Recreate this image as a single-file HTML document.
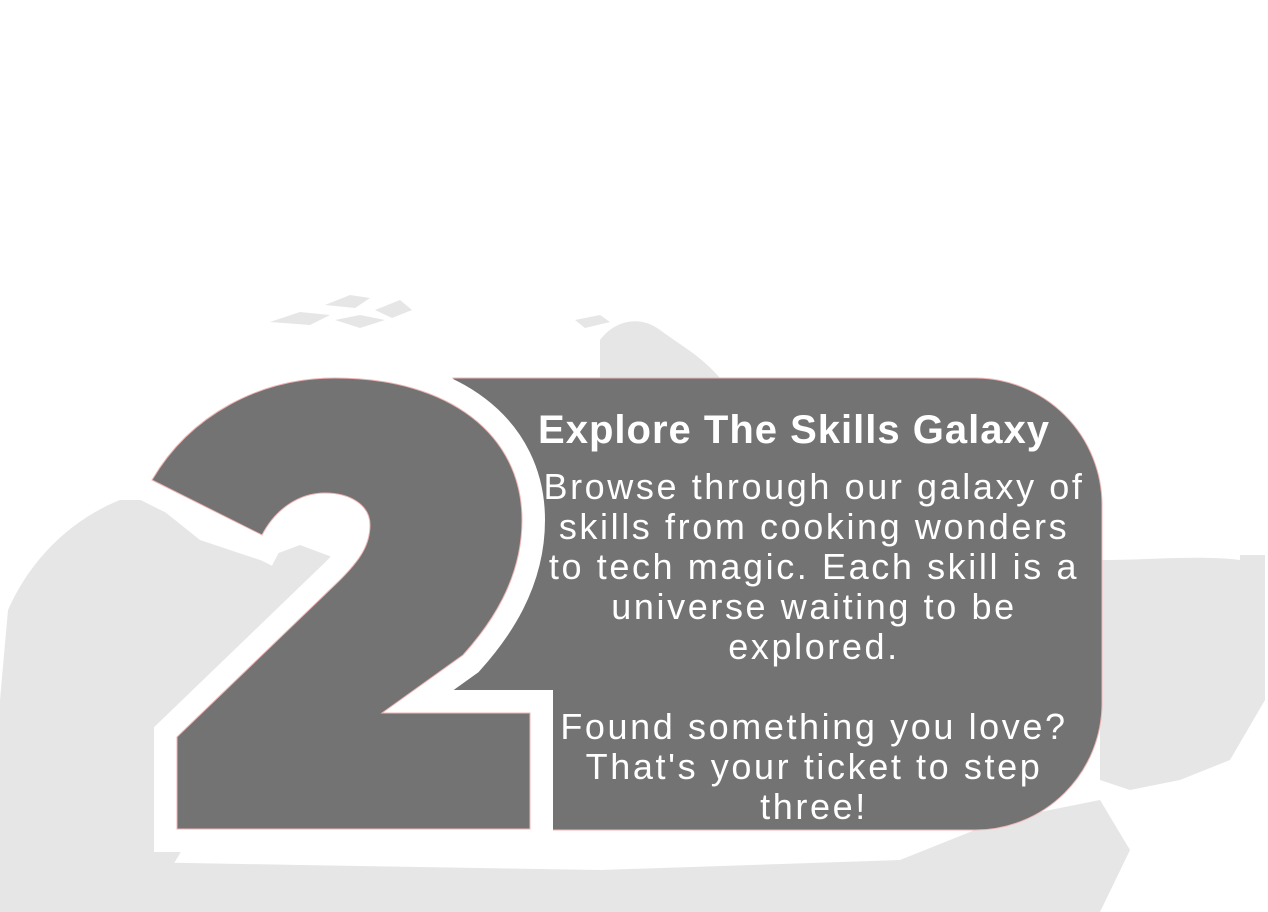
<!DOCTYPE html>
<html><head><meta charset="utf-8"><style>
html,body{margin:0;padding:0;background:#fff;width:1268px;height:912px;overflow:hidden}
svg{position:absolute;left:0;top:0}
.t{position:absolute;color:#fff;font-family:"Liberation Sans",sans-serif;text-align:center;white-space:nowrap}
</style></head><body>
<svg width="1268" height="912" viewBox="0 0 1268 912">
<g fill="#e6e6e6">
<path d="M8,610 C30,560 70,520 120,500 L150,500 L200,540 L260,560 L300,545 L340,560 L330,620 L300,700 L240,760 L200,820 L170,870 L160,912 L0,912 L0,700 Z"/>
<path d="M20,860 L300,865 L600,870 L900,860 L1000,820 L1100,800 L1130,850 L1100,912 L0,912 Z"/>
<path d="M1100,560 C1150,560 1200,555 1240,560 L1265,565 L1265,700 L1230,760 L1180,780 L1130,790 L1100,780 Z"/>
<path d="M1240,555 L1265,555 L1265,568 L1240,565 Z"/>
<path d="M600,340 C615,320 640,315 660,330 C680,345 700,355 720,378 L600,378 Z"/>
<path d="M575,320 L600,315 L610,322 L585,328 Z"/>
<path d="M270,322 L300,312 L330,315 L310,325 Z"/>
<path d="M325,305 L350,295 L370,298 L355,308 Z"/>
<path d="M335,320 L360,315 L385,320 L360,328 Z"/>
<path d="M375,310 L400,300 L412,310 L392,318 Z"/>
</g>
<path d="M453,378 L975,378 A127,127 0 0 1 1102,505 L1102,703 A127,127 0 0 1 975,830 L453,830 Z" fill="#737373" stroke="#f0b4b4" stroke-width="1"/>
<path d="M152,480 C190,415 260,378 335,378 C450,378 522,435 522,520 C522,580 490,625 463,655 L382,713 L530,713 L530,829 L177,829 L177,737 L340,580 C360,560 370,545 370,525 C370,505 350,493 325,493 C298,493 275,510 262,535 Z" fill="#737373" stroke="#fff" stroke-width="46" stroke-linejoin="miter" paint-order="stroke"/>
<path d="M152,480 C190,415 260,378 335,378 C450,378 522,435 522,520 C522,580 490,625 463,655 L382,713 L530,713 L530,829 L177,829 L177,737 L340,580 C360,560 370,545 370,525 C370,505 350,493 325,493 C298,493 275,510 262,535 Z" fill="#737373" stroke="#f0b4b4" stroke-width="1"/>
</svg>
<div class="t" style="left:494px;top:406px;width:600px;font-size:40px;font-weight:bold;line-height:48px;letter-spacing:1px">Explore The Skills Galaxy</div>
<div class="t" style="left:514px;top:467px;width:600px;font-size:36px;line-height:40px;letter-spacing:2.6px">Browse through our galaxy of<br>skills from cooking wonders<br>to tech magic. Each skill is a<br>universe waiting to be<br>explored.<br><br>Found something you love?<br>That's your ticket to step<br>three!</div>
</body></html>
